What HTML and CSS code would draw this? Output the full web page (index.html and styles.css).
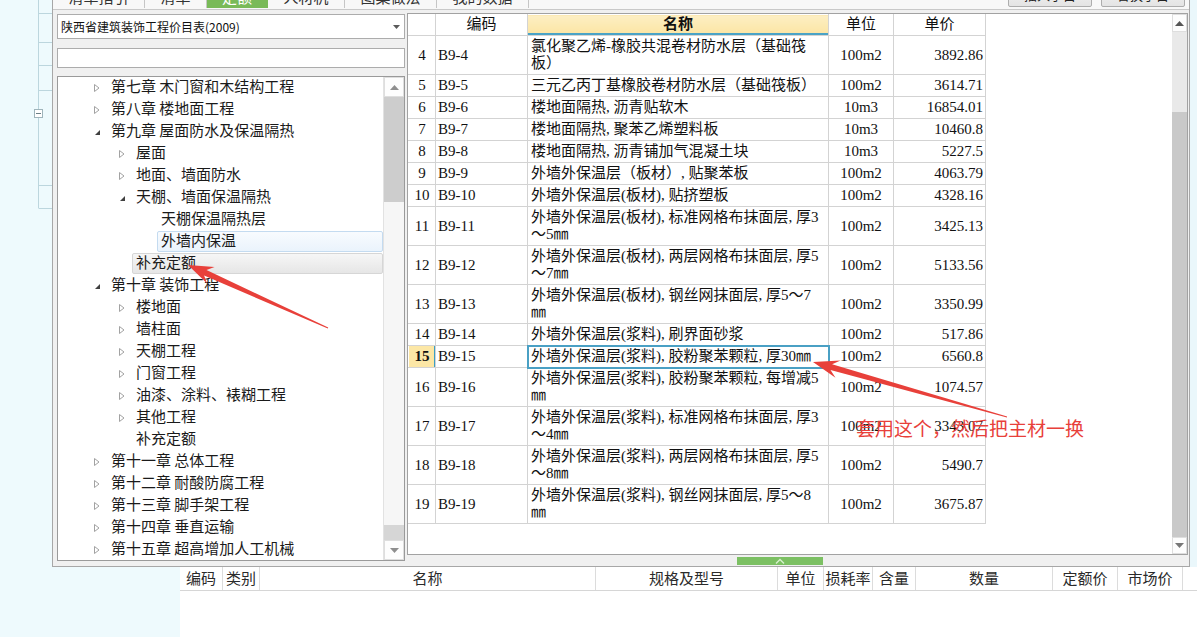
FILE: index.html
```
<!DOCTYPE html>
<html lang="zh-CN">
<head>
<meta charset="utf-8">
<title>定额</title>
<link rel="stylesheet" href="styles.css">
</head>
<body>
<div class="page">
  <div class="top">
    <div class="strip-l">
      <svg class="strip-lines" width="52" height="566" viewBox="0 0 52 566">
        <g stroke="#bcd6de" stroke-width="1" fill="none">
          <path d="M38.5 0 V109"/>
          <path d="M38.5 118 V208"/>
          <path d="M38.5 13.5 H52 M38.5 42.5 H52 M38.5 65.5 H52 M38.5 90.5 H52 M38.5 185.5 H52 M38.5 208.5 H52"/>
          <rect x="34.5" y="109.5" width="8" height="8" stroke="#9fb4bb" fill="#fff"/>
          <path d="M36 113.5 H41" stroke="#6b7f86"/>
        </g>
      </svg>
    </div>
    <div class="dialog">
      <div class="tabbar">
        <div class="tab tw1">清单指引</div>
        <div class="tab tw2">清单</div>
        <div class="tab tw3 on">定额</div>
        <div class="tab tw4">人材机</div>
        <div class="tab tw5">图集做法</div>
        <div class="tab tw5">我的数据</div>
        <div class="tbtns">
          <div class="tbtn">插入子目</div>
          <div class="tbtn">替换子目</div>
        </div>
      </div>
      <div class="dbody">
        <div class="lcol">
          <div class="combo">
            <span class="combo-text">陕西省建筑装饰工程价目表(2009)</span>
            <svg class="combo-arrow" width="7" height="4" viewBox="0 0 7 4"><path d="M0 0 H7 L3.5 4 Z" fill="#5a5a5a"/></svg>
          </div>
          <div class="search"></div>
          <div class="tree">
            <div class="tree-list">
              <div class="trow l1"><span class="tw"><svg class="tg" width="8" height="10" viewBox="0 0 8 10"><path d="M1.5 1.5 L6 5 L1.5 8.5 Z" fill="#fff" stroke="#a2a2a2"/></svg></span><span class="tl">第七章 木门窗和木结构工程</span></div>
              <div class="trow l1"><span class="tw"><svg class="tg" width="8" height="10" viewBox="0 0 8 10"><path d="M1.5 1.5 L6 5 L1.5 8.5 Z" fill="#fff" stroke="#a2a2a2"/></svg></span><span class="tl">第八章 楼地面工程</span></div>
              <div class="trow l1"><span class="tw"><svg class="tg" width="8" height="10" viewBox="0 0 8 10"><path d="M7 3 L7 8 L2 8 Z" fill="#404040"/></svg></span><span class="tl">第九章 屋面防水及保温隔热</span></div>
              <div class="trow l2"><span class="tw"><svg class="tg" width="8" height="10" viewBox="0 0 8 10"><path d="M1.5 1.5 L6 5 L1.5 8.5 Z" fill="#fff" stroke="#a2a2a2"/></svg></span><span class="tl">屋面</span></div>
              <div class="trow l2"><span class="tw"><svg class="tg" width="8" height="10" viewBox="0 0 8 10"><path d="M1.5 1.5 L6 5 L1.5 8.5 Z" fill="#fff" stroke="#a2a2a2"/></svg></span><span class="tl">地面、墙面防水</span></div>
              <div class="trow l2"><span class="tw"><svg class="tg" width="8" height="10" viewBox="0 0 8 10"><path d="M7 3 L7 8 L2 8 Z" fill="#404040"/></svg></span><span class="tl">天棚、墙面保温隔热</span></div>
              <div class="trow l3"><span class="tw"></span><span class="tl">天棚保温隔热层</span></div>
              <div class="trow l3"><span class="tw"></span><span class="tl sel">外墙内保温</span></div>
              <div class="trow l2"><span class="tw"></span><span class="tl hov">补充定额</span></div>
              <div class="trow l1"><span class="tw"><svg class="tg" width="8" height="10" viewBox="0 0 8 10"><path d="M7 3 L7 8 L2 8 Z" fill="#404040"/></svg></span><span class="tl">第十章 装饰工程</span></div>
              <div class="trow l2"><span class="tw"><svg class="tg" width="8" height="10" viewBox="0 0 8 10"><path d="M1.5 1.5 L6 5 L1.5 8.5 Z" fill="#fff" stroke="#a2a2a2"/></svg></span><span class="tl">楼地面</span></div>
              <div class="trow l2"><span class="tw"><svg class="tg" width="8" height="10" viewBox="0 0 8 10"><path d="M1.5 1.5 L6 5 L1.5 8.5 Z" fill="#fff" stroke="#a2a2a2"/></svg></span><span class="tl">墙柱面</span></div>
              <div class="trow l2"><span class="tw"><svg class="tg" width="8" height="10" viewBox="0 0 8 10"><path d="M1.5 1.5 L6 5 L1.5 8.5 Z" fill="#fff" stroke="#a2a2a2"/></svg></span><span class="tl">天棚工程</span></div>
              <div class="trow l2"><span class="tw"><svg class="tg" width="8" height="10" viewBox="0 0 8 10"><path d="M1.5 1.5 L6 5 L1.5 8.5 Z" fill="#fff" stroke="#a2a2a2"/></svg></span><span class="tl">门窗工程</span></div>
              <div class="trow l2"><span class="tw"><svg class="tg" width="8" height="10" viewBox="0 0 8 10"><path d="M1.5 1.5 L6 5 L1.5 8.5 Z" fill="#fff" stroke="#a2a2a2"/></svg></span><span class="tl">油漆、涂料、裱糊工程</span></div>
              <div class="trow l2"><span class="tw"><svg class="tg" width="8" height="10" viewBox="0 0 8 10"><path d="M1.5 1.5 L6 5 L1.5 8.5 Z" fill="#fff" stroke="#a2a2a2"/></svg></span><span class="tl">其他工程</span></div>
              <div class="trow l2"><span class="tw"></span><span class="tl">补充定额</span></div>
              <div class="trow l1"><span class="tw"><svg class="tg" width="8" height="10" viewBox="0 0 8 10"><path d="M1.5 1.5 L6 5 L1.5 8.5 Z" fill="#fff" stroke="#a2a2a2"/></svg></span><span class="tl">第十一章 总体工程</span></div>
              <div class="trow l1"><span class="tw"><svg class="tg" width="8" height="10" viewBox="0 0 8 10"><path d="M1.5 1.5 L6 5 L1.5 8.5 Z" fill="#fff" stroke="#a2a2a2"/></svg></span><span class="tl">第十二章 耐酸防腐工程</span></div>
              <div class="trow l1"><span class="tw"><svg class="tg" width="8" height="10" viewBox="0 0 8 10"><path d="M1.5 1.5 L6 5 L1.5 8.5 Z" fill="#fff" stroke="#a2a2a2"/></svg></span><span class="tl">第十三章 脚手架工程</span></div>
              <div class="trow l1"><span class="tw"><svg class="tg" width="8" height="10" viewBox="0 0 8 10"><path d="M1.5 1.5 L6 5 L1.5 8.5 Z" fill="#fff" stroke="#a2a2a2"/></svg></span><span class="tl">第十四章 垂直运输</span></div>
              <div class="trow l1"><span class="tw"><svg class="tg" width="8" height="10" viewBox="0 0 8 10"><path d="M1.5 1.5 L6 5 L1.5 8.5 Z" fill="#fff" stroke="#a2a2a2"/></svg></span><span class="tl">第十五章 超高增加人工机械</span></div>
            </div>
            <div class="tree-sb">
              <div class="sb-btn tsb-up"><svg width="9" height="5" viewBox="0 0 9 5"><path d="M0 5 L4.5 0 L9 5 Z" fill="#8e8e8e"/></svg></div>
              <div class="tsb-thumb"></div>
              <div class="tsb-track"></div>
              <div class="tsb-block"></div>
              <div class="sb-btn tsb-down"><svg width="9" height="5" viewBox="0 0 9 5"><path d="M0 0 L4.5 5 L9 0 Z" fill="#8e8e8e"/></svg></div>
            </div>
          </div>
        </div>
        <div class="rcol">
          <div class="grid-panel">
            <div class="grid-area">
              <table class="grid">
                <colgroup><col class="c0"><col class="c1"><col class="c2"><col class="c3"><col class="c4"></colgroup>
                <thead>
                  <tr><th></th><th>编码</th><th class="hname">名称</th><th>单位</th><th>单价</th></tr>
                </thead>
                <tbody>
                  <tr><td class="rn">4</td><td class="code">B9-4</td><td class="name">氯化聚乙烯-橡胶共混卷材防水层（基础筏<br>板）</td><td class="unit">100m2</td><td class="price">3892.86</td></tr>
                  <tr><td class="rn">5</td><td class="code">B9-5</td><td class="name">三元乙丙丁基橡胶卷材防水层（基础筏板）</td><td class="unit">100m2</td><td class="price">3614.71</td></tr>
                  <tr><td class="rn">6</td><td class="code">B9-6</td><td class="name">楼地面隔热, 沥青贴软木</td><td class="unit">10m3</td><td class="price">16854.01</td></tr>
                  <tr><td class="rn">7</td><td class="code">B9-7</td><td class="name">楼地面隔热, 聚苯乙烯塑料板</td><td class="unit">10m3</td><td class="price">10460.8</td></tr>
                  <tr><td class="rn">8</td><td class="code">B9-8</td><td class="name">楼地面隔热, 沥青铺加气混凝土块</td><td class="unit">10m3</td><td class="price">5227.5</td></tr>
                  <tr><td class="rn">9</td><td class="code">B9-9</td><td class="name">外墙外保温层（板材）, 贴聚苯板</td><td class="unit">100m2</td><td class="price">4063.79</td></tr>
                  <tr><td class="rn">10</td><td class="code">B9-10</td><td class="name">外墙外保温层(板材), 贴挤塑板</td><td class="unit">100m2</td><td class="price">4328.16</td></tr>
                  <tr><td class="rn">11</td><td class="code">B9-11</td><td class="name">外墙外保温层(板材), 标准网格布抹面层, 厚3<br>～5㎜</td><td class="unit">100m2</td><td class="price">3425.13</td></tr>
                  <tr><td class="rn">12</td><td class="code">B9-12</td><td class="name">外墙外保温层(板材), 两层网格布抹面层, 厚5<br>～7㎜</td><td class="unit">100m2</td><td class="price">5133.56</td></tr>
                  <tr><td class="rn">13</td><td class="code">B9-13</td><td class="name">外墙外保温层(板材), 钢丝网抹面层, 厚5～7<br>㎜</td><td class="unit">100m2</td><td class="price">3350.99</td></tr>
                  <tr><td class="rn">14</td><td class="code">B9-14</td><td class="name">外墙外保温层(浆料), 刷界面砂浆</td><td class="unit">100m2</td><td class="price">517.86</td></tr>
                  <tr><td class="rn cur">15</td><td class="code">B9-15</td><td class="name cell-sel">外墙外保温层(浆料), 胶粉聚苯颗粒, 厚30㎜</td><td class="unit">100m2</td><td class="price">6560.8</td></tr>
                  <tr><td class="rn">16</td><td class="code">B9-16</td><td class="name">外墙外保温层(浆料), 胶粉聚苯颗粒, 每增减5<br>㎜</td><td class="unit">100m2</td><td class="price">1074.57</td></tr>
                  <tr><td class="rn">17</td><td class="code">B9-17</td><td class="name">外墙外保温层(浆料), 标准网格布抹面层, 厚3<br>～4㎜</td><td class="unit">100m2</td><td class="price">3343.07</td></tr>
                  <tr><td class="rn">18</td><td class="code">B9-18</td><td class="name">外墙外保温层(浆料), 两层网格布抹面层, 厚5<br>～8㎜</td><td class="unit">100m2</td><td class="price">5490.7</td></tr>
                  <tr><td class="rn">19</td><td class="code">B9-19</td><td class="name">外墙外保温层(浆料), 钢丝网抹面层, 厚5～8<br>㎜</td><td class="unit">100m2</td><td class="price">3675.87</td></tr>
                </tbody>
              </table>
            </div>
            <div class="grid-sb">
              <div class="sb-btn gsb-up"><svg width="9" height="5" viewBox="0 0 9 5"><path d="M0 5 L4.5 0 L9 5 Z" fill="#555"/></svg></div>
              <div class="gsb-track"></div>
              <div class="gsb-thumb"></div>
              <div class="sb-btn gsb-down"><svg width="9" height="5" viewBox="0 0 9 5"><path d="M0 0 L4.5 5 L9 0 Z" fill="#777"/></svg></div>
            </div>
          </div>
          <div class="splitter">
            <div class="handle"><svg width="10" height="6" viewBox="0 0 10 6"><path d="M1 5.5 L5 1.5 L9 5.5" fill="none" stroke="#d9f0cf" stroke-width="1.4"/></svg></div>
          </div>
        </div>
      </div>
    </div>
    <div class="strip-r"></div>
  </div>
  <div class="bottom">
    <div class="bl"></div>
    <div class="bgrid">
      <div class="bhead">
        <div class="bh bw1">编码</div>
        <div class="bh bw2">类别</div>
        <div class="bh bw3">名称</div>
        <div class="bh bw4">规格及型号</div>
        <div class="bh bw5">单位</div>
        <div class="bh bw6">损耗率</div>
        <div class="bh bw7">含量</div>
        <div class="bh bw8">数量</div>
        <div class="bh bw9">定额价</div>
        <div class="bh bw9">市场价</div>
      </div>
    </div>
  </div>
  <svg class="annot" width="1197" height="637" viewBox="0 0 1197 637">
    <polygon fill="#e8403a" points="328.2,327.5 206.5,270.1 214.5,267.0 188,265 207.1,283.4 204.1,275.5 327.8,328.5"/>
    <polygon fill="#e8403a" points="1007.1,416.5 832.1,364.3 840.5,360.4 813,362 835.5,377.8 830.5,370.1 1006.9,417.5"/>
  </svg>
  <div class="note">套用这个，然后把主材一换</div>
</div>
</body>
</html>
```

FILE: styles.css
```
html, body {
  margin: 0;
  padding: 0;
}
body {
  width: 1197px;
  height: 637px;
  overflow: hidden;
  background: #fff;
  font-family: "Noto Sans CJK SC", sans-serif;
  color: #1a1a1a;
}
.page {
  position: relative;
  width: 1197px;
  height: 637px;
  overflow: hidden;
}

/* ---------- top area ---------- */
.top {
  display: flex;
  height: 567px;
}
.strip-l {
  width: 52px;
  flex: none;
  background: #eefafd;
}
.strip-lines { display: block; }
.strip-r {
  flex: 1;
  background: #eaf7fb;
}
.dialog {
  width: 1138px;
  flex: none;
  box-sizing: border-box;
  border-left: 1px solid #a7a7a7;
  border-right: 1px solid #a7a7a7;
  border-bottom: 1px solid #a7a7a7;
  background: #f0f0f0;
  display: flex;
  flex-direction: column;
}

/* tabs (clipped at top of the screen) */
.tabbar {
  height: 10px;
  box-sizing: border-box;
  border-bottom: 1px solid #c9c9c9;
  background: #f8f8f8;
  display: flex;
  align-items: flex-start;
  overflow: hidden;
  flex: none;
}
.tab {
  height: 23px;
  margin-top: -15px;
  box-sizing: border-box;
  border-right: 1px solid #c6c6c6;
  text-align: center;
  font-size: 15px;
  line-height: 23px;
  color: #333;
  flex: none;
}
.tw1 { width: 92px; }
.tw2 { width: 62px; }
.tw3 { width: 61px; }
.tw4 { width: 77px; }
.tw5 { width: 92px; }
.tab.on {
  background: #79ba58;
  color: #fff;
  border-right-color: #79ba58;
}
.tbtns {
  margin-left: auto;
  margin-right: 4px;
  display: flex;
  gap: 9px;
}
.tbtn {
  height: 20px;
  margin-top: -13px;
  width: 84px;
  box-sizing: border-box;
  border: 1px solid #adadad;
  border-radius: 2px;
  background: linear-gradient(#f2f2f2, #e4e4e4);
  font-size: 13px;
  line-height: 14px;
  text-align: center;
  color: #222;
}

/* dialog body */
.dbody {
  flex: 1;
  display: flex;
  padding-left: 4px;
  gap: 2px;
}
.lcol {
  width: 348px;
  flex: none;
  display: flex;
  flex-direction: column;
}
.combo {
  margin-top: 4px;
  height: 25px;
  box-sizing: border-box;
  border: 1px solid #acacac;
  background: #fff;
  display: flex;
  align-items: center;
  padding: 0 4px 0 3px;
}
.combo-text {
  flex: 1;
  font-size: 12px;
  color: #111;
  white-space: nowrap;
}
.combo-arrow { display: block; }
.search {
  margin-top: 9px;
  height: 20px;
  box-sizing: border-box;
  border: 1px solid #acacac;
  background: #fff;
}
.tree {
  margin-top: 8px;
  height: 485px;
  box-sizing: border-box;
  border: 1px solid #9a9a9a;
  background: #fff;
  display: flex;
  overflow: hidden;
}
.tree-list {
  flex: 1;
  overflow: hidden;
}
.trow {
  display: flex;
  height: 22px;
  font-size: 15px;
  color: #1a1a1a;
}
.l1 { padding-left: 31px; }
.l2 { padding-left: 56px; }
.l3 { padding-left: 81px; }
.tw {
  width: 18px;
  height: 21px;
  flex: none;
  box-sizing: border-box;
  padding-left: 4px;
  display: flex;
  align-items: center;
}
.tg { display: block; }
.tl {
  flex: 1;
  height: 21px;
  box-sizing: border-box;
  border: 1px solid transparent;
  border-radius: 2px;
  padding: 0 3px 3px;
  line-height: 16px;
  white-space: nowrap;
}
.tl.sel {
  background: linear-gradient(#f8fbfe, #eaf3fc);
  border-color: #c4dbf0;
}
.tl.hov {
  background: linear-gradient(#f6f6f6, #e6e6e6);
  border-color: #d6d6d6;
}

/* tree scrollbar */
.tree-sb {
  width: 21px;
  flex: none;
  box-sizing: border-box;
  border-left: 1px solid #e2e2e2;
  background: #f6f6f6;
  display: flex;
  flex-direction: column;
}
.sb-btn {
  display: flex;
  align-items: center;
  justify-content: center;
  box-sizing: border-box;
  background: #fdfdfd;
  border: 1px solid #dedede;
  flex: none;
}
.sb-btn svg { display: block; }
.tsb-up, .tsb-down { height: 20px; }
.tsb-thumb {
  height: 105px;
  background: #cdcdcd;
  flex: none;
}
.tsb-track { flex: 1; }
.tsb-block {
  height: 15px;
  background: #d6d6d6;
  flex: none;
}

/* right column grid */
.rcol {
  width: 781px;
  flex: none;
  display: flex;
  flex-direction: column;
}
.grid-panel {
  margin-top: 3px;
  height: 542px;
  box-sizing: border-box;
  border: 1px solid #a2a2a2;
  background: #fff;
  display: flex;
}
.grid-area {
  flex: 1;
  overflow: hidden;
}
.grid {
  border-collapse: collapse;
  table-layout: fixed;
  width: 577px;
  font-family: "Liberation Serif", "Noto Sans CJK SC", serif;
  font-size: 15px;
  color: #111;
}
.c0 { width: 27px; }
.c1 { width: 92px; }
.c2 { width: 301px; }
.c3 { width: 65px; }
.c4 { width: 92px; }
.grid th, .grid td {
  border: 1px solid #d3d3d3;
  padding: 2px 3px;
  line-height: 17px;
  white-space: nowrap;
  overflow: hidden;
}
.grid thead th {
  font-weight: normal;
  padding: 1px 3px 2px;
  text-align: center;
  border-top-color: #fff;
  border-left-color: #fff;
  background: #fff;
}
.grid th.hname {
  font-weight: bold;
  background: linear-gradient(#fdefc3, #fbe4a2);
  box-shadow: inset 0 -2px 0 #4aa3c6;
}
.grid tbody tr td:first-child { border-left-color: #fff; }
.rn {
  text-align: center;
  padding-left: 0 !important;
  padding-right: 0 !important;
}
.rn.cur {
  background: #fce7a6;
  font-weight: bold;
  box-shadow: inset -1px 0 0 #3c9ec4;
}
.code { padding-left: 2px !important; }
.unit { text-align: center; }
.price {
  text-align: right;
  padding-right: 2px !important;
}
.cell-sel {
  outline: 2px solid #4aa0c4;
  outline-offset: -1px;
}

/* grid scrollbar */
.grid-sb {
  width: 15px;
  flex: none;
  display: flex;
  flex-direction: column;
  background: #e8e8e8;
}
.gsb-up { height: 18px; }
.gsb-down { height: 17px; }
.gsb-track {
  height: 80px;
  flex: none;
  background: #e9e9e9;
}
.gsb-thumb {
  flex: 1;
  background: #c9c9c9;
}

/* splitter */
.splitter {
  height: 11px;
  flex: none;
}
.handle {
  margin-top: 2px;
  margin-left: 330px;
  width: 86px;
  height: 8px;
  background: #7cc063;
  display: flex;
  justify-content: center;
  align-items: flex-start;
}
.handle svg { display: block; margin-top: 1px; }

/* ---------- bottom area ---------- */
.bottom {
  display: flex;
  height: 70px;
}
.bl {
  width: 180px;
  flex: none;
  background: #eefafd;
}
.bgrid {
  flex: 1;
  background: #fff;
}
.bhead {
  display: flex;
  height: 24px;
  box-sizing: border-box;
  border-bottom: 1px solid #d6d6d6;
}
.bh {
  flex: none;
  box-sizing: border-box;
  border-right: 1px solid #dcdcdc;
  text-align: center;
  font-size: 15px;
  line-height: 22px;
  color: #2a2a2a;
  white-space: nowrap;
}
.bw1 { width: 43px; }
.bw2 { width: 37px; }
.bw3 { width: 336px; }
.bw4 { width: 182px; }
.bw5 { width: 46px; }
.bw6 { width: 49px; }
.bw7 { width: 43px; }
.bw8 { width: 137px; }
.bw9 { width: 65px; }

/* ---------- annotation overlay ---------- */
.annot {
  position: absolute;
  left: 0;
  top: 0;
  pointer-events: none;
}
.note {
  position: absolute;
  left: 856px;
  top: 418px;
  font-size: 19px;
  line-height: 19px;
  color: #e8403a;
  white-space: nowrap;
}
```
